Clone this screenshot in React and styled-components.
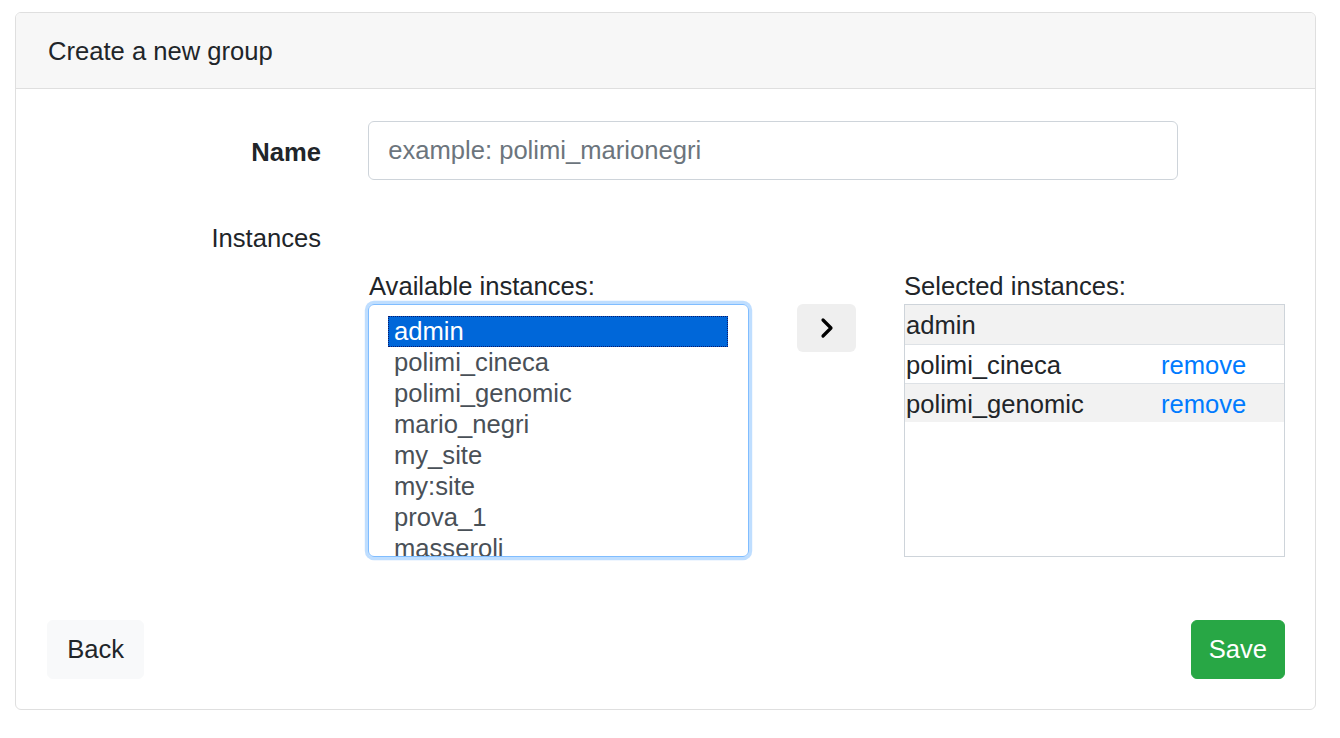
import React from "react";
import styled, { createGlobalStyle } from "styled-components";

const Global = createGlobalStyle`
  html, body { margin: 0; padding: 0; background: #fff; }
  body {
    font-family: "Liberation Sans", Arial, Helvetica, sans-serif;
    font-size: 25.6px;
    line-height: 1.5;
    color: #212529;
  }
  * { box-sizing: border-box; }
`;

const Page = styled.div`
  padding: 12px 24px 0 15px;
`;

const Card = styled.section`
  border: 1px solid #dfdfdf;
  border-radius: 6px;
  overflow: hidden;
  background: #fff;
`;

const CardHeader = styled.header`
  background: #f7f7f7;
  border-bottom: 1px solid #dfdfdf;
  padding: 18.5px 32px;
  font-size: 25.6px;
  line-height: 38.4px;
  color: #212529;
`;

const CardBody = styled.div`
  padding: 32px 30px 30px 31px;
`;

const FormRow = styled.div`
  display: grid;
  grid-template-columns: 274px 1fr;
  column-gap: 47px;
  align-items: start;
  margin-bottom: ${(p) => p.$mb || 0}px;
`;

const Label = styled.label`
  text-align: right;
  padding: 11.5px 0 9.7px;
  line-height: 38.4px;
  font-weight: ${(p) => (p.$bold ? 700 : 400)};
`;

const Input = styled.input`
  display: block;
  width: 810px;
  height: 59px;
  padding: 9.6px 19.2px;
  font-family: inherit;
  font-size: 25.6px;
  line-height: 38.4px;
  color: #495057;
  border: 1px solid #ced4da;
  border-radius: 6px;
  outline: none;
  &::placeholder { color: #6c757d; }
`;

const DualList = styled.div`
  display: grid;
  grid-template-columns: 381px 59px 381px;
  column-gap: 48px;
  align-items: start;
`;

const Column = styled.div`
  display: flex;
  flex-direction: column;
`;

const ListTitle = styled.div`
  line-height: 38.4px;
  padding-left: ${(p) => p.$indent || 0}px;
  height: 37px;
`;

const ListBox = styled.div`
  height: 253px;
  border: 1px solid #80bdff;
  border-radius: 6px;
  box-shadow: 0 0 0 3.2px rgba(0, 123, 255, 0.25);
  padding: 11px 20px 0 19px;
  overflow: hidden;
`;

const Option = styled.div`
  line-height: 29px;
  height: 31px;
  padding: 0 5px;
  color: ${(p) => (p.$selected ? "#fff" : "#495057")};
  background: ${(p) => (p.$selected ? "#0067d9" : "transparent")};
  border: 1px ${(p) => (p.$selected ? "dotted #0a1a6e" : "solid transparent")};
  white-space: nowrap;
`;

const MoveButton = styled.button`
  margin-top: 37px;
  width: 59px;
  height: 48px;
  border: none;
  border-radius: 6px;
  background: #efefef;
  display: flex;
  align-items: center;
  justify-content: center;
  padding: 0;
  cursor: pointer;
`;

const SelectedBox = styled.div`
  height: 253px;
  border: 1px solid #ced4da;
  overflow: hidden;
`;

const SelRow = styled.div`
  display: grid;
  grid-template-columns: 255px 1fr;
  height: 39px;
  padding-top: 2px;
  line-height: 36px;
  padding-left: 1px;
  background: ${(p) => (p.$striped ? "#f2f2f2" : "#fff")};
  border-top: ${(p) => (p.$first ? "none" : "1px solid #dee2e6")};
  color: #212529;
`;

const RemoveLink = styled.a`
  color: #007bff;
  text-decoration: none;
  cursor: pointer;
`;

const Footer = styled.div`
  display: flex;
  justify-content: space-between;
  margin-top: 63px;
`;

const Button = styled.button`
  font-family: inherit;
  font-size: 25.6px;
  line-height: 38.4px;
  padding: 9.6px ${(p) => (p.$variant === "success" ? 17 : 19.2)}px;
  border-radius: 6px;
  border: 1px solid ${(p) => (p.$variant === "success" ? "#28a745" : "#f8f9fa")};
  background: ${(p) => (p.$variant === "success" ? "#28a745" : "#f8f9fa")};
  color: ${(p) => (p.$variant === "success" ? "#fff" : "#212529")};
  cursor: pointer;
`;

const available = [
  "admin",
  "polimi_cineca",
  "polimi_genomic",
  "mario_negri",
  "my_site",
  "my:site",
  "prova_1",
  "masseroli",
];

const selected = [
  { name: "admin", removable: false },
  { name: "polimi_cineca", removable: true },
  { name: "polimi_genomic", removable: true },
];

export default function App() {
  return (
    <>
      <Global />
      <Page>
        <Card>
          <CardHeader>Create a new group</CardHeader>
          <CardBody>
            <FormRow $mb={26}>
              <Label $bold>Name</Label>
              <Input placeholder="example: polimi_marionegri" />
            </FormRow>
            <FormRow>
              <Label>Instances</Label>
              <div />
            </FormRow>
            <FormRow>
              <div />
              <DualList>
                <Column>
                  <ListTitle $indent={1}>Available instances:</ListTitle>
                  <ListBox role="listbox">
                    {available.map((n, i) => (
                      <Option key={n} $selected={i === 0}>
                        {n}
                      </Option>
                    ))}
                  </ListBox>
                </Column>
                <MoveButton aria-label="add">
                  <svg width="16" height="22" viewBox="0 0 16 22">
                    <polyline
                      points="4,3 12,11 4,19"
                      fill="none"
                      stroke="#000"
                      strokeWidth="3.2"
                      strokeLinecap="round"
                      strokeLinejoin="round"
                    />
                  </svg>
                </MoveButton>
                <Column>
                  <ListTitle>Selected instances:</ListTitle>
                  <SelectedBox>
                    {selected.map((s, i) => (
                      <SelRow key={s.name} $first={i === 0} $striped={i % 2 === 0}>
                        <span>{s.name}</span>
                        <span>{s.removable && <RemoveLink>remove</RemoveLink>}</span>
                      </SelRow>
                    ))}
                  </SelectedBox>
                </Column>
              </DualList>
            </FormRow>
            <Footer>
              <Button>Back</Button>
              <Button $variant="success">Save</Button>
            </Footer>
          </CardBody>
        </Card>
      </Page>
    </>
  );
}
